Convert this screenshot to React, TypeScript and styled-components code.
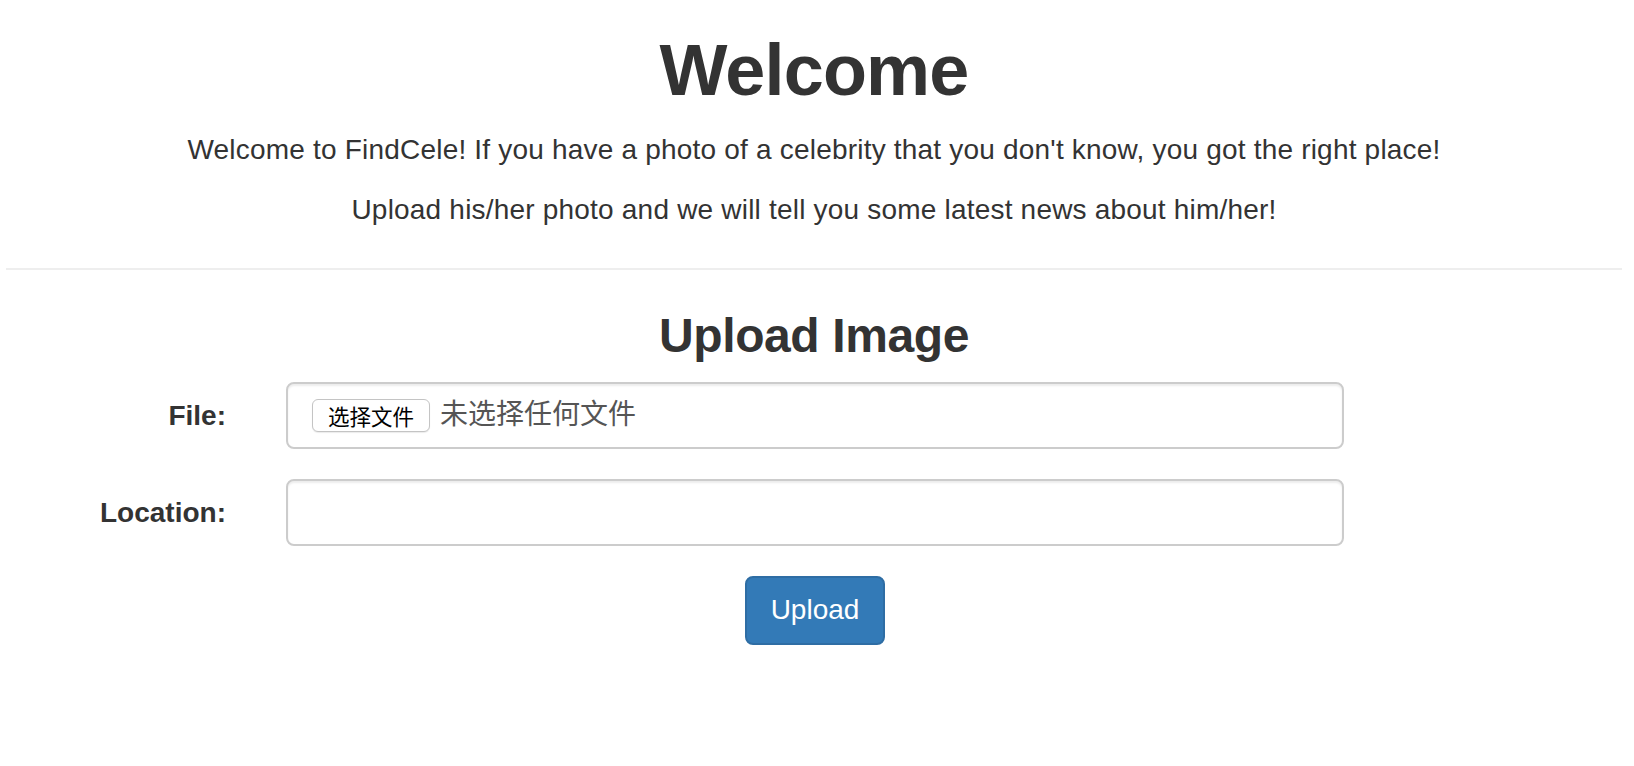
import styled, { createGlobalStyle } from "styled-components";

const GlobalStyle = createGlobalStyle`
  html, body {
    margin: 0;
    padding: 0;
    background: #fff;
  }
  body {
    font-family: "Liberation Sans", Arial, "Noto Sans CJK SC", sans-serif;
    font-size: 28px;
    line-height: 40px;
    color: #333;
  }
  * {
    box-sizing: border-box;
  }
`;

const Page = styled.div`
  padding: 0 12px 40px 6px;
`;

const Header = styled.header`
  text-align: center;
`;

const Title = styled.h1`
  margin: 31px 0 20px;
  font-size: 72px;
  line-height: 1.1;
  font-weight: bold;
  letter-spacing: -0.8px;
`;

const Lead = styled.p`
  margin: 0 0 20px;
  letter-spacing: 0.2px;
`;

// margins collapse with the paragraph above
const Divider = styled.hr`
  margin: 38px 0 0;
  border: 0;
  border-top: 2px solid #eee;
`;

const SectionTitle = styled.h3`
  margin: 40px 0 19px;
  font-size: 48px;
  line-height: 1.1;
  font-weight: bold;
  text-align: center;
  letter-spacing: -0.4px;
`;

const FormGroup = styled.div`
  display: grid;
  grid-template-columns: 250px 1118px;
  margin-bottom: 30px;
`;

const Label = styled.label`
  padding: 14px 30px 0 0;
  text-align: right;
  font-weight: bold;
`;

const Field = styled.div`
  padding: 0 30px;
`;

const Control = styled.div`
  display: flex;
  align-items: center;
  height: 67px;
  padding: 0 24px;
  border: 2px solid #ccc;
  border-radius: 8px;
  background: #fff;
  box-shadow: inset 0 2px 2px rgba(0, 0, 0, 0.075);
`;

const TextInput = styled.input`
  display: block;
  width: 100%;
  height: 67px;
  padding: 0 24px;
  border: 2px solid #ccc;
  border-radius: 8px;
  font: inherit;
  color: #555;
  box-shadow: inset 0 2px 2px rgba(0, 0, 0, 0.075);
  outline: none;
`;

const PickButton = styled.button`
  height: 33px;
  padding: 0 15px;
  margin-right: 10px;
  border: 1px solid #c4c4c4;
  border-radius: 6px;
  background: #fff;
  font-family: "Noto Sans CJK SC", sans-serif;
  font-size: 21.5px;
  line-height: 1;
  color: #000;
  box-shadow: 0 1px 1px rgba(0, 0, 0, 0.08);
`;

const FileStatus = styled.span`
  font-family: "Noto Sans CJK SC", sans-serif;
  font-size: 28px;
  color: #555;
  margin-top: -6px;
`;

const Actions = styled.div`
  display: flex;
  justify-content: center;
  padding-left: 2px;
`;

const SubmitButton = styled.button`
  height: 69px;
  padding: 0 24px;
  border: 2px solid #2e6da4;
  border-radius: 8px;
  background: #337ab7;
  color: #fff;
  font: inherit;
  cursor: pointer;
`;

export default function App() {
  return (
    <Page>
      <GlobalStyle />
      <Header>
        <Title>Welcome</Title>
        <Lead>
          Welcome to FindCele! If you have a photo of a celebrity that you don't
          know, you got the right place!
        </Lead>
        <Lead>
          Upload his/her photo and we will tell you some latest news about
          him/her!
        </Lead>
      </Header>
      <Divider />
      <SectionTitle>Upload Image</SectionTitle>
      <form onSubmit={(e) => e.preventDefault()}>
        <FormGroup>
          <Label>File:</Label>
          <Field>
            <Control>
              <PickButton type="button">选择文件</PickButton>
              <FileStatus>未选择任何文件</FileStatus>
            </Control>
          </Field>
        </FormGroup>
        <FormGroup>
          <Label>Location:</Label>
          <Field>
            <TextInput type="text" />
          </Field>
        </FormGroup>
        <Actions>
          <SubmitButton type="submit">Upload</SubmitButton>
        </Actions>
      </form>
    </Page>
  );
}
